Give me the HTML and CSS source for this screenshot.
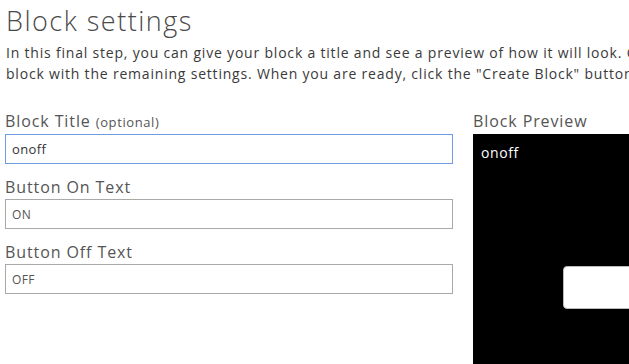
FILE: index.html
```html
<!DOCTYPE html>
<html lang="en">
<head>
    <meta charset="UTF-8">
    <title>Block settings</title>
    <link rel="stylesheet" href="styles.css">
</head>
<body>
    <div class="page">
        <h1>Block settings</h1>
        <p class="intro">In this final step, you can give your block a title and see a preview of how it will look. Customize your<br>block with the remaining settings. When you are ready, click the "Create Block" button below.</p>

        <div class="columns">
            <form class="settings">
                <div class="input-group">
                    <label for="title">Block Title <span class="hint">(optional)</span></label>
                    <input type="text" id="title" class="focused" value="onoff">
                </div>
                <div class="input-group">
                    <label for="on-text">Button On Text</label>
                    <input type="text" id="on-text" value="ON">
                </div>
                <div class="input-group">
                    <label for="off-text">Button Off Text</label>
                    <input type="text" id="off-text" value="OFF">
                </div>
            </form>

            <div class="preview">
                <div class="preview-label">Block Preview</div>
                <div class="preview-box">
                    <div class="preview-title">onoff</div>
                    <div class="preview-button"></div>
                </div>
            </div>
        </div>
    </div>
</body>
</html>
```

FILE: styles.css
```css
* {
    box-sizing: border-box;
    margin: 0;
    padding: 0;
}

body {
    font-family: 'Open Sans', 'Liberation Sans', sans-serif;
    color: #555;
    background-color: #fff;
    overflow: hidden;
    height: 364px;
}

.page {
    width: 820px;
    padding: 4px 0 0 6px;
}

h1 {
    font-weight: 300;
    font-size: 27px;
    line-height: 34px;
    color: #4a4a4a;
    letter-spacing: 1.5px;
}

.intro {
    margin-top: 4px;
    font-size: 14px;
    line-height: 21px;
    color: #3a3a3a;
    white-space: nowrap;
    letter-spacing: 0.8px;
}

.columns {
    display: flex;
    gap: 20px;
    margin-top: 27px;
}

.settings {
    width: 448px;
    margin-left: -1px;
}

.input-group {
    margin-bottom: 13px;
}

label {
    display: block;
    margin-bottom: 2px;
    font-size: 16px;
    line-height: 20px;
    color: #555;
    letter-spacing: 0.9px;
}

.hint {
    font-size: 13px;
    letter-spacing: 0.6px;
}

input[type="text"] {
    display: block;
    width: 100%;
    height: 30px;
    padding: 0 6px;
    border: 1px solid #a9a9a9;
    font-family: 'Open Sans', 'Liberation Sans', sans-serif;
    font-size: 12px;
    color: #555;
    letter-spacing: 0.4px;
    outline: none;
}

input.focused {
    border-color: #6f9be0;
    font-size: 13px;
    color: #333;
    text-decoration: underline wavy #e02020;
    text-decoration-thickness: 1px;
    text-underline-offset: 4px;
}

.preview {
    width: 300px;
}

.preview-label {
    margin-bottom: 3px;
    font-size: 16px;
    line-height: 20px;
    color: #555;
    letter-spacing: 0.9px;
}

.preview-box {
    height: 240px;
    background-color: #000;
    color: #fff;
    padding: 10px 8px;
    display: flex;
    flex-direction: column;
    align-items: flex-start;
}

.preview-title {
    font-size: 14px;
    line-height: 18px;
    letter-spacing: 0.6px;
}

.preview-button {
    width: 120px;
    height: 43px;
    margin: 104px 0 0 82px;
    background-color: #fff;
    border: 1px solid #bbb;
    border-radius: 4px;
}
```
